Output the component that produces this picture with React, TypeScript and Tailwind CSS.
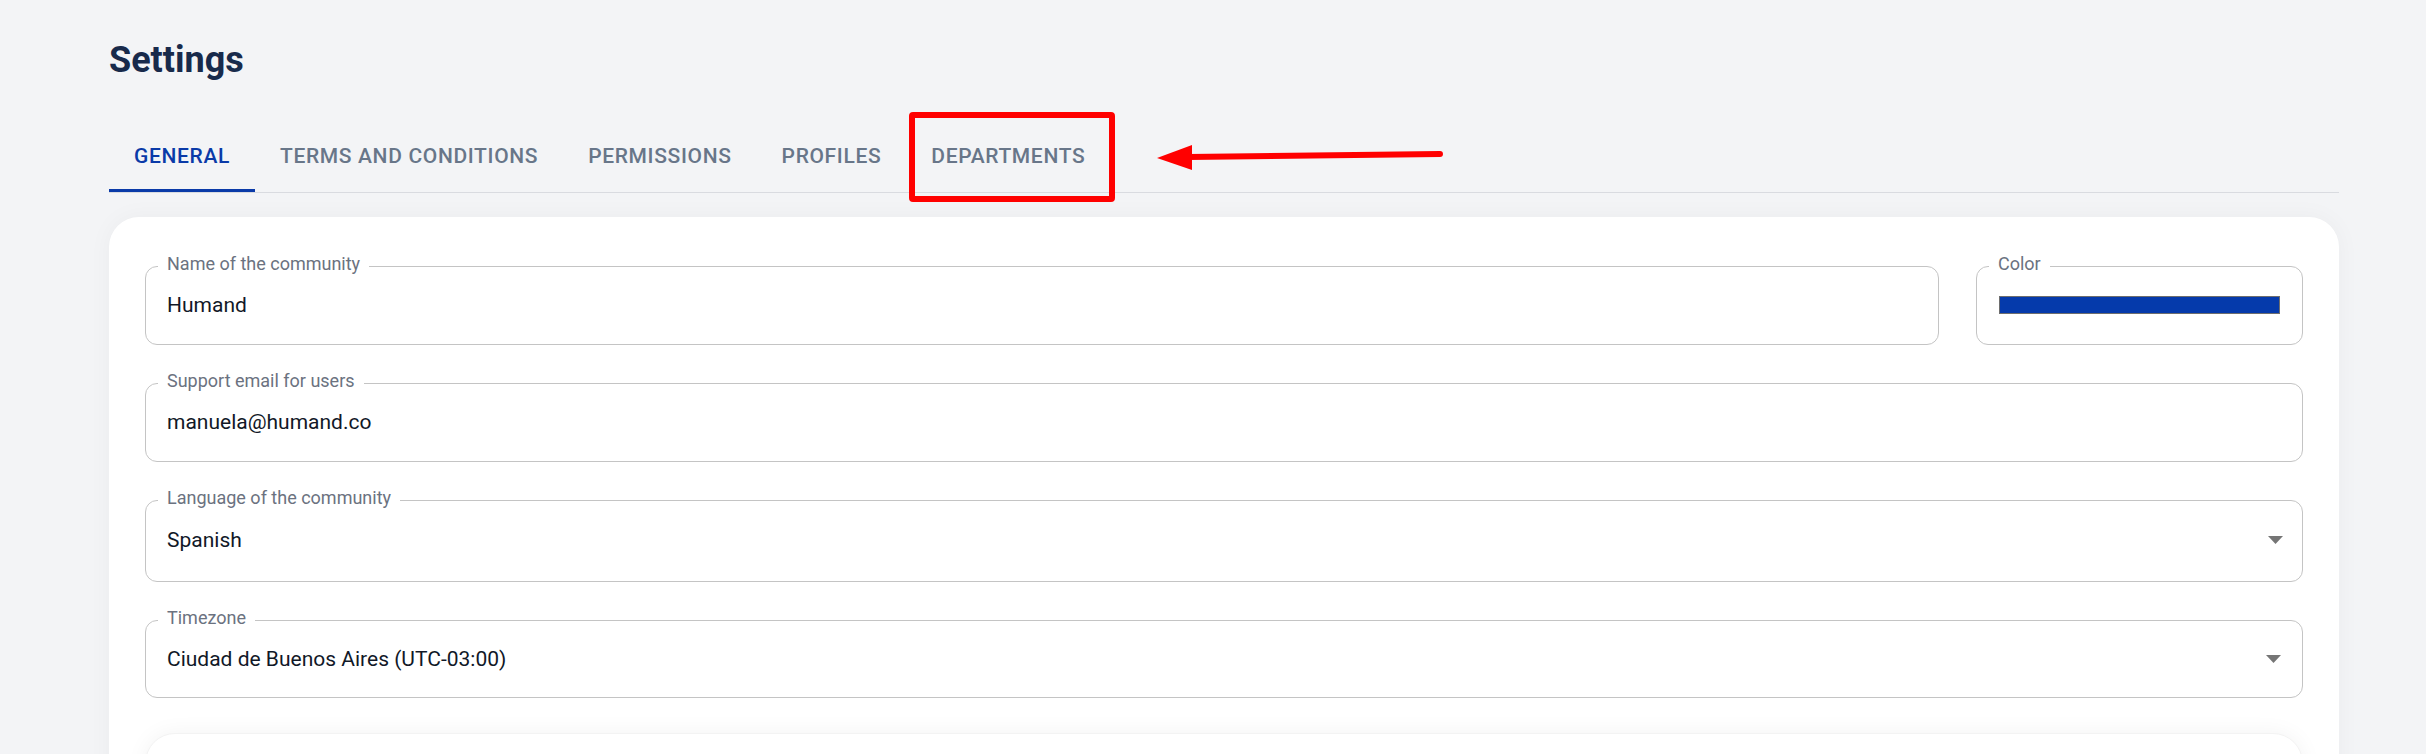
import { ReactNode } from "react";

const tabs = ["GENERAL", "TERMS AND CONDITIONS", "PERMISSIONS", "PROFILES", "DEPARTMENTS"];

// outlined field, like the MUI one: the legend sits on the top border
const Field = ({ label, children, className = "" }: { label: string; children: ReactNode; className?: string }) => (
  <fieldset className={`min-w-0 border border-[#c4c4c4] rounded-[12px] ${className}`}>
    <legend className="ml-[12px] px-[9px] pb-[4px] text-[18px] leading-[26px] text-[#6b7280]">{label}</legend>
    {children}
  </fieldset>
);

const Caret = () => (
  <svg width="15" height="8" viewBox="0 0 15 8" className="shrink-0">
    <polygon points="0,0 15,0 7.5,8" fill="#757575" />
  </svg>
);

const App = () => {
  return (
    <div className="min-h-screen bg-[#f3f4f6] pl-[109px] pr-[87px] pt-[38px] font-['Roboto',sans-serif]">
      <h1 className="text-[36px] leading-[44px] font-bold text-[#182a4b]">Settings</h1>

      {/* Tabs */}
      <div className="relative mt-[38px] flex border-b border-[#d9dbe0]">
        {tabs.map((tab, i) => (
          <div
            key={tab}
            className={`h-[72px] px-[25px] pt-[5px] flex items-center border-b-[3px] text-[21px] font-medium tracking-[0.65px] ${
              i === 0 ? "border-[#0a3aa8] text-[#0a3aa8]" : "border-transparent text-[#687689]"
            }`}
          >
            {tab}
          </div>
        ))}

        {/* annotation */}
        <div className="absolute left-[800px] -top-[8px] w-[206px] h-[90px] border-[6px] border-[#ff0000] rounded-[4px]" />
        <svg className="absolute left-[1041px] top-[20px]" width="300" height="40" viewBox="0 0 300 40">
          <line x1="38" y1="17" x2="290" y2="14" stroke="#ff0000" strokeWidth="6" strokeLinecap="round" />
          <polygon points="7,18 42,5 42,30" fill="#ff0000" />
        </svg>
      </div>

      {/* General card */}
      <div className="mt-[24px] bg-white rounded-[30px] px-[36px] pt-[34px] pb-[40px] shadow-[0_0_24px_rgba(0,0,0,0.04)]">
        <div className="flex flex-col gap-[23px]">
          <div className="flex gap-[37px]">
            <Field label="Name of the community" className="flex-1">
              <div className="pl-[21px] pt-[11px] pb-[26px] text-[21px] leading-[26px] text-[#111827]">Humand</div>
            </Field>
            <Field label="Color" className="w-[327px]">
              <div className="px-[22px] pt-[11px] pb-[26px] h-[63px] flex items-start">
                <div className="h-[26px] w-full flex items-center">
                  <div className="h-[18px] w-full bg-[#053aab] border border-[#6e6e6e]" />
                </div>
              </div>
            </Field>
          </div>

          <Field label="Support email for users">
            <div className="pl-[21px] pt-[11px] pb-[26px] text-[21px] leading-[26px] text-[#111827]">manuela@humand.co</div>
          </Field>

          <Field label="Language of the community">
            <div className="pl-[21px] pr-[19px] pt-[12px] pb-[28px] flex items-center justify-between text-[21px] leading-[26px] text-[#111827]">
              <span>Spanish</span>
              <Caret />
            </div>
          </Field>

          <Field label="Timezone">
            <div className="pl-[21px] pr-[21px] pt-[11px] pb-[25px] flex items-center justify-between text-[21px] leading-[26px] text-[#111827]">
              <span>Ciudad de Buenos Aires (UTC-03:00)</span>
              <Caret />
            </div>
          </Field>
        </div>

        <div className="mt-[35px] h-[200px] rounded-[30px] bg-white border border-[#f3f3f3] shadow-[0_0_22px_rgba(0,0,0,0.05)]" />
      </div>
    </div>
  );
};

export default App;
